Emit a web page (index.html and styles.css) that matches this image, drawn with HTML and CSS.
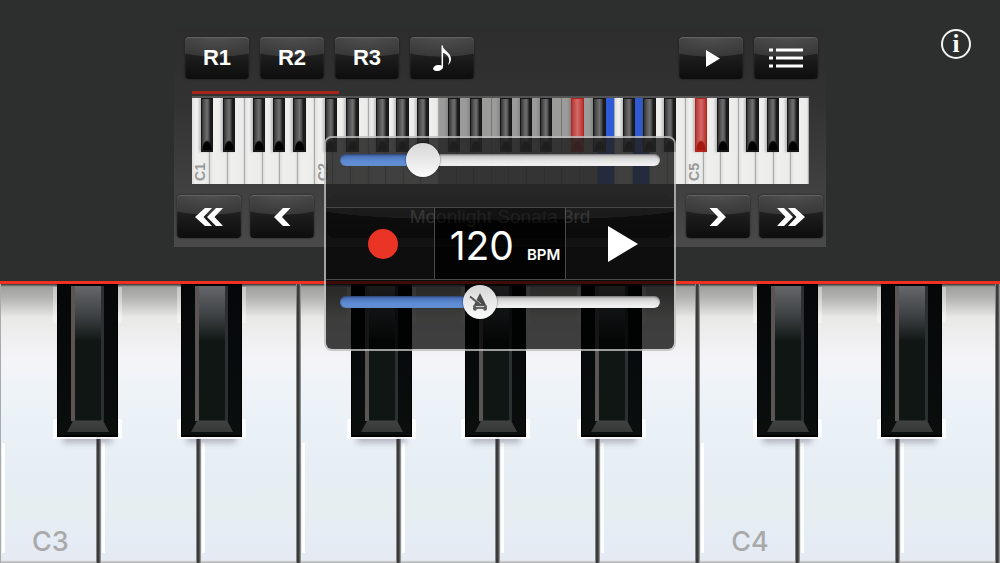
FILE: index.html
```html
<!DOCTYPE html>
<html lang="en">
<head>
    <meta charset="UTF-8">
    <meta name="viewport" content="width=device-width, initial-scale=1.0">
    <title>Piano</title>
    <link rel="stylesheet" href="styles.css">
</head>
<body>
    <div class="app">
        <header class="top">
            <button class="info" aria-label="Info">i</button>
            <div class="panel">
                <div class="toolbar">
                    <button class="btn">R1</button>
                    <button class="btn">R2</button>
                    <button class="btn">R3</button>
                    <button class="btn" aria-label="Notes">
                        <svg width="20" height="28" viewBox="0 0 20 28">
                            <ellipse cx="6" cy="24" rx="5" ry="3" transform="rotate(-12 6 24)" fill="#fff"/>
                            <path d="M10.300 24V1.500" fill="none" stroke="#fff" stroke-width="1.500"/>
                            <path d="M10 1.500c1.500 5 9 7 9 13.500 0 2-1 4.500-3 6 3-6 0-11-6-12.500z" fill="#fff"/>
                        </svg>
                    </button>
                    <span class="spacer"></span>
                    <button class="btn" aria-label="Play">
                        <svg width="18" height="17" viewBox="0 0 18 17"><path d="M4 0l14 8.500L4 17z" fill="#fff"/></svg>
                    </button>
                    <button class="btn" aria-label="Song list">
                        <svg width="36" height="20" viewBox="0 0 36 20">
                            <path d="M1 2h4M1 10h4M1 18h4M8 2h27M8 10h27M8 18h27" stroke="#fff" stroke-width="3"/>
                        </svg>
                    </button>
                </div>
                <div class="overview">
                    <div class="progress"></div>
                    <div class="mini" id="mini"></div>
                </div>
                <div class="toolbar bottom">
                    <button class="btn" aria-label="Octave down">
                        <svg width="30" height="20" viewBox="0 0 30 20"><path d="M1 10L11 1h7L9.500 10l8.500 9h-7zM13 10l9-9h7l-8.500 9 8.500 9h-7z" fill="#fff"/></svg>
                    </button>
                    <button class="btn" aria-label="Key down">
                        <svg width="18" height="20" viewBox="0 0 18 20"><path d="M1 10L10 1h7.500L9 10l8.500 9H10z" fill="#fff"/></svg>
                    </button>
                    <div class="song">Moonlight Sonata 3rd</div>
                    <button class="btn" aria-label="Key up">
                        <svg width="18" height="20" viewBox="0 0 18 20"><path d="M17 10L8 1H.5L9 10 .5 19H8z" fill="#fff"/></svg>
                    </button>
                    <button class="btn" aria-label="Octave up">
                        <svg width="30" height="20" viewBox="0 0 30 20"><path d="M29 10L19 1h-7l8.500 9-8.500 9h7zM17 10L8 1H1l8.500 9L1 19h7z" fill="#fff"/></svg>
                    </button>
                </div>
            </div>
        </header>

        <main class="piano" id="piano"></main>

        <section class="popup">
            <div class="slider-row upper">
                <div class="slider" style="--value: 0.23">
                    <input type="range" min="0" max="100" value="23" aria-label="Volume">
                </div>
            </div>
            <div class="transport">
                <button class="cell" aria-label="Record"><span class="record"></span></button>
                <button class="cell tempo"><span class="bpm-value">120</span><span class="bpm-unit">BPM</span></button>
                <button class="cell" aria-label="Play">
                    <svg width="30" height="36" viewBox="0 0 30 36"><path d="M0 0l30 18-30 18z" fill="#fff"/></svg>
                </button>
            </div>
            <div class="slider-row lower">
                <div class="slider" style="--value: 0.43">
                    <input type="range" min="0" max="100" value="43" aria-label="Metronome volume">
                    <svg class="metronome" width="20" height="20" viewBox="0 0 20 20">
                        <path d="M11 1l6.500 13h-13z" fill="#4c4c4c"/>
                        <path d="M2 4l10 8" stroke="#d8d8d8" stroke-width="1"/>
                        <path d="M1 4.500l11 9" stroke="#555" stroke-width="1.800"/>
                        <path d="M4 13.500h14V17H4z" fill="#666"/>
                        <circle cx="6" cy="17" r="1.800" fill="#555"/>
                        <circle cx="16" cy="17" r="1.800" fill="#555"/>
                        <path d="M7 14.500h8" stroke="#ccc"/>
                    </svg>
                </div>
            </div>
        </section>
    </div>
    <script src="script.js"></script>
</body>
</html>
```

FILE: styles.css
```css
* {
    box-sizing: border-box;
}

body {
    margin: 0;
    font-family: "Liberation Sans", Arial, sans-serif;
    background: #2d2f2e;
    color: #fff;
}

button {
    margin: 0;
    padding: 0;
    border: none;
    color: #fff;
    font: inherit;
    cursor: pointer;
}

.app {
    position: relative;
    display: flex;
    flex-direction: column;
    min-height: 100vh;
}

/* Top panel */
.top {
    padding: 27px 0 34px;
    border-bottom: 3px solid #f03020;
}

.info {
    position: absolute;
    top: 29px;
    right: 29px;
    width: 30px;
    height: 30px;
    border: 2px solid #f4f4f4;
    border-radius: 50%;
    background: none;
    font-family: "Liberation Serif", serif;
    font-size: 25px;
    font-weight: bold;
    line-height: 24px;
}

.panel {
    max-width: 652px;
    margin: 0 auto;
    padding-bottom: 9px;
    background: linear-gradient(#2d2d2d, #323232 35%, #4a4a4a);
}

.toolbar {
    display: flex;
    gap: 11px;
    padding: 10px 8px 0 11px;
}

.toolbar.bottom {
    gap: 9px;
    padding: 11px 3px 0;
}

.spacer {
    flex: 1;
}

.btn {
    display: flex;
    flex: none;
    align-items: center;
    justify-content: center;
    width: 64px;
    height: 42px;
    border-radius: 4px;
    background:
        radial-gradient(ellipse 60px 20px at 50% 0, #505050 0, #383838 96%, transparent 100%),
        linear-gradient(#333, #1c1c1c 50%, #0d0d0d);
    box-shadow: inset 0 1px 1px #666, 0 0 2px #1a1a1a;
    font-size: 22px;
    font-weight: bold;
}

.bottom .btn,
.song {
    height: 43px;
}

.song {
    flex: 1;
    margin: 0 4px;
    border-radius: 8px;
    background: linear-gradient(#333, #1a1a1a);
    color: #ddd;
    font-size: 19px;
    line-height: 44px;
    text-align: center;
}

/* Keyboard overview */
.overview {
    padding: 12px 17px 0 18px;
}

.progress {
    width: 147px;
    height: 3px;
    margin-bottom: 2px;
    background: #a6241a;
}

.mini {
    position: relative;
    display: flex;
    height: 88px;
    border-top: 2px solid #555;
}

.mini-white {
    flex: 1;
    display: flex;
    align-items: flex-end;
    border-right: 1px solid #aaa;
    background: linear-gradient(90deg, #dededf, #efefed 20%, #ececea 90%, #d8d8d8);
}

.mini-white.visible {
    background: #9b9b99;
    border-color: #777;
}

.mini-white.pressed {
    background: #2f5bd6;
}

.mini-label {
    padding-top: 3px;
    color: #999;
    font-size: 14px;
    font-weight: bold;
    line-height: 17px;
    writing-mode: vertical-rl;
    transform: rotate(180deg);
}

.mini-black {
    position: absolute;
    top: 0;
    width: 2%;
    height: 54px;
    border: 1px solid #161616;
    border-bottom-width: 2px;
    background:
        radial-gradient(ellipse 5px 10px at 50% 100%, #000 80%, transparent),
        linear-gradient(90deg, #333 0, #555 25%, #707070 50%, #555 65%, #1c1c1c 85%);
    box-shadow: -2px 0 2px rgba(80, 85, 95, 0.3);
}

.mini-black.pressed {
    border-color: #b3231b;
    background:
        radial-gradient(ellipse 5px 10px at 50% 100%, #a3180f 80%, transparent),
        linear-gradient(90deg, #b53a36, #d56a67 50%, #b5332e);
}

/* Main keyboard */
.piano {
    position: relative;
    display: flex;
    flex: 1;
    min-height: 279px;
    padding-left: 1px;
    overflow: hidden;
    background: #aaa;
}

.white-key {
    position: relative;
    flex: none;
    display: flex;
    align-items: flex-end;
    width: 10%;
    padding: 0 0 4px 31px;
    background: linear-gradient(#333 0, #a0a09e 1%, #b3b3b1 5%, #e9e9e7 12%, #f4f4f8 26%, #edf3f7 40%, #e6eef5 68%, #e6eef0 80%, #e5ecf5 92%, #e6eaf2 99%, #aaa);
    color: #a9a9a9;
    font-family: Inter, sans-serif;
    font-size: 27px;
    font-weight: 500;
    line-height: 34px;
}

.white-key::before {
    content: "";
    position: absolute;
    top: 57%;
    bottom: 10px;
    left: 1px;
    width: 3px;
    background: #fff;
}

.white-key::after {
    content: "";
    position: absolute;
    top: 0;
    right: 0;
    width: 5px;
    height: 100%;
    background: linear-gradient(90deg, #aaa, #3b3b3b 30%, #3b3b3b 60%, #aaa);
}

.black-key {
    position: absolute;
    top: 0;
    width: 6.1%;
    height: 55%;
    margin-left: 1px;
    border: 1px solid #000;
    border-bottom-width: 2px;
    background: linear-gradient(#050708, #0a0e0d);
    box-shadow: 0 12px 6px -6px rgba(60, 50, 70, 0.3);
}

/* light edges of the white keys round a black key */
.black-key::before,
.black-key::after {
    content: "";
    position: absolute;
    left: -5px;
    right: -5px;
    border: solid #fff;
    border-width: 0 4px;
}

.black-key::before {
    top: 2px;
    height: 36px;
    opacity: 0.4;
}

.black-key::after {
    bottom: -4px;
    height: 18px;
    border-bottom-width: 2px;
    border-radius: 2px;
    opacity: 0.85;
}

.facet {
    position: absolute;
    top: 1px;
    bottom: 14px;
    left: 22%;
    right: 22%;
    border-left: 4px solid #5a5452;
    border-right: 3px solid #2c3032;
    background: linear-gradient(#66666b, #3d4144 22%, #101614 41%);
}

.bevel {
    position: absolute;
    bottom: 3px;
    left: 15%;
    right: 13%;
    height: 12px;
    background: linear-gradient(#414342, #363837);
    clip-path: polygon(15% 0, 85% 0, 100% 100%, 0 100%);
}

/* Tempo popup */
.popup {
    position: absolute;
    top: 136px;
    left: 50%;
    width: 352px;
    margin-left: -176px;
    border: 2px solid rgba(190, 190, 190, 0.8);
    border-radius: 8px;
    overflow: hidden;
    z-index: 2;
}

.slider-row {
    height: 69px;
    padding: 5px 14px 0;
}

.slider-row.upper {
    background: rgba(35, 35, 35, 0.86);
}

.slider-row.lower {
    background: rgba(0, 0, 0, 0.74);
}

.slider {
    position: relative;
    height: 34px;
}

.slider input {
    display: block;
    width: 100%;
    height: 34px;
    margin: 0;
    background: none;
    appearance: none;
    -webkit-appearance: none;
}

.slider input::-webkit-slider-runnable-track {
    height: 12px;
    border-radius: 6px;
    background:
        linear-gradient(#4569ae, #5d8bd3 60%, #648fd2) no-repeat 0 0 / calc(17px + (100% - 34px) * var(--value)) 100%,
        linear-gradient(#b9b9b9, #e2e2e2 50%, #f5f5f5);
    box-shadow: inset 0 1px 2px rgba(0, 0, 0, 0.4);
}

.slider input::-webkit-slider-thumb {
    width: 34px;
    height: 34px;
    margin-top: -11px;
    border-radius: 50%;
    background: linear-gradient(#d6d6d6, #fbfbfb);
    box-shadow: 0 0 2px rgba(0, 0, 0, 0.7);
    -webkit-appearance: none;
}

.metronome {
    position: absolute;
    top: 7px;
    left: calc(6px + (100% - 34px) * var(--value));
    pointer-events: none;
}

.transport {
    position: relative;
    display: grid;
    grid-template-columns: 1fr 132px 1fr;
    border: solid #484848;
    border-width: 1px 0;
}

/* glass highlight */
.transport::after {
    content: "";
    position: absolute;
    inset: 0;
    background: radial-gradient(ellipse 184px 12px at 50% 0, rgba(255, 255, 255, 0.06) 98%, transparent);
    pointer-events: none;
}

.cell {
    display: flex;
    align-items: center;
    justify-content: center;
    height: 71px;
    padding-left: 6px;
    background: rgba(8, 8, 8, 0.84);
}

.cell.tempo {
    align-items: baseline;
    gap: 13px;
    padding-top: 14px;
    padding-left: 10px;
    border: solid #484848;
    border-width: 0 1px;
    background: rgba(0, 0, 0, 0.92);
    font-family: Inter, sans-serif;
}

.bpm-value {
    font-size: 39px;
    line-height: 48px;
}

.bpm-unit {
    font-size: 15px;
    font-weight: 600;
}

.record {
    width: 30px;
    height: 30px;
    border-radius: 50%;
    background: #ea3526;
}
```

FILE: script.js
```js
// black keys of one octave, as offsets in white-key widths
const MINI_BLACK = [0.87, 2.11, 3.8, 4.95, 6.1];
const BIG_BLACK = [0.56, 1.8, 3.5, 4.64, 5.8];

const mini = document.getElementById('mini');
const piano = document.getElementById('piano');

function addKey(parent, className, left) {
    const key = document.createElement('div');
    key.className = className;
    if (left !== undefined) key.style.left = left + '%';
    parent.appendChild(key);
    return key;
}

for (let i = 0; i < 35; i++) {
    const key = addKey(mini, 'mini-white');
    if (i >= 14 && i <= 22) key.classList.add('visible');
    if (i === 23 || i === 25) key.classList.add('pressed');
    if (i % 7 === 0) {
        key.innerHTML = '<span class="mini-label">C' + (i / 7 + 1) + '</span>';
    }
}

for (let octave = 0; octave < 5; octave++) {
    MINI_BLACK.forEach((offset, n) => {
        const left = (octave * 7 + offset) / 35 * 100 - 1;
        const key = addKey(mini, 'mini-black', left);
        if (octave >= 3 && n === 0) key.classList.add('pressed');
    });
}

for (let i = 0; i < 10; i++) {
    const key = addKey(piano, 'white-key');
    if (i % 7 === 0) key.textContent = 'C' + (i / 7 + 3);
}

for (let octave = 0; octave < 2; octave++) {
    BIG_BLACK.forEach(offset => {
        const left = (octave * 7 + offset) * 10;
        if (left > 100) return;
        const key = addKey(piano, 'black-key', left);
        key.innerHTML = '<span class="facet"></span><span class="bevel"></span>';
    });
}
```
